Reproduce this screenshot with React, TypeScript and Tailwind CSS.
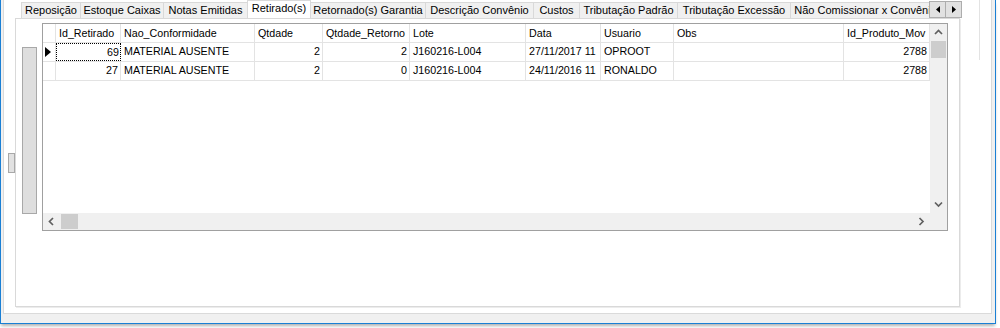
import React from 'react';

type Col = {
  key: string;
  label: string;
  width: number;
  align?: 'left' | 'right';
};

const columns: Col[] = [
  { key: 'id', label: 'Id_Retirado', width: 65, align: 'right' },
  { key: 'nao', label: 'Nao_Conformidade', width: 134 },
  { key: 'qtd', label: 'Qtdade', width: 68, align: 'right' },
  { key: 'ret', label: 'Qtdade_Retorno', width: 87, align: 'right' },
  { key: 'lote', label: 'Lote', width: 116 },
  { key: 'data', label: 'Data', width: 75 },
  { key: 'usuario', label: 'Usuario', width: 73 },
  { key: 'obs', label: 'Obs', width: 170 },
  { key: 'prod', label: 'Id_Produto_Mov', width: 86, align: 'right' },
];

const rows: Record<string, string>[] = [
  { id: '69', nao: 'MATERIAL AUSENTE', qtd: '2', ret: '2', lote: 'J160216-L004', data: '27/11/2017 11', usuario: 'OPROOT', obs: '', prod: '2788' },
  { id: '27', nao: 'MATERIAL AUSENTE', qtd: '2', ret: '0', lote: 'J160216-L004', data: '24/11/2016 11', usuario: 'RONALDO', obs: '', prod: '2788' },
];

const tabs = [
  { label: 'Reposição', width: 60 },
  { label: 'Estoque Caixas', width: 83 },
  { label: 'Notas Emitidas', width: 84 },
  { label: 'Retirado(s)', width: 64, active: true },
  { label: 'Retornado(s) Garantia', width: 115 },
  { label: 'Descrição Convênio', width: 108 },
  { label: 'Custos', width: 46 },
  { label: 'Tributação Padrão', width: 98 },
  { label: 'Tributação Excessão', width: 113 },
  { label: 'Não Comissionar x Convênio', width: 150 },
];

const Chevron = ({ dir }: { dir: 'up' | 'down' | 'left' | 'right' }) => {
  const d = {
    up: 'M1 5 L4.5 1.5 L8 5',
    down: 'M1 1.5 L4.5 5 L8 1.5',
    left: 'M5 1 L1.5 4.5 L5 8',
    right: 'M1.5 1 L5 4.5 L1.5 8',
  }[dir];
  const vertical = dir === 'up' || dir === 'down';
  return (
    <svg width={vertical ? 9 : 7} height={vertical ? 7 : 9} viewBox={vertical ? '0 0 9 7' : '0 0 7 9'}>
      <path d={d} fill="none" stroke="#606060" strokeWidth="1.7" />
    </svg>
  );
};

const TabArrow = ({ right }: { right?: boolean }) => (
  <div className={`w-[17px] h-[17px] bg-[#e1e1e1] border border-[#adadad] flex items-center justify-center ${right ? '-ml-px' : ''}`}>
    <svg width="4" height="7" viewBox="0 0 4 7">
      <path d={right ? 'M0 0 L4 3.5 L0 7 Z' : 'M4 0 L0 3.5 L4 7 Z'} fill="#000" />
    </svg>
  </div>
);

const Grid = () => {
  return (
    <div className="w-[906px] h-[208px] border border-[#a0a0a0] bg-white grid grid-cols-[887px_17px] grid-rows-[189px_17px] text-[10.7px]">
      {/* data area */}
      <div className="overflow-hidden">
        <div className="flex h-[19px] border-b border-[#e3e3e3]">
          <div className="w-[13px] shrink-0 border-r border-[#e3e3e3]" />
          {columns.map((c) => (
            <div
              key={c.key}
              style={{ width: c.width }}
              className="shrink-0 border-r border-[#e3e3e3] pl-[3px] leading-[18px] whitespace-nowrap overflow-hidden"
            >
              {c.label}
            </div>
          ))}
        </div>
        {rows.map((r, i) => (
          <div key={i} className="flex h-[19px] border-b border-[#e3e3e3]">
            <div className="w-[13px] shrink-0 border-r border-[#e3e3e3] flex items-center pl-[2px]">
              {i === 0 && (
                <svg width="6" height="10" viewBox="0 0 6 10">
                  <path d="M0 0 L6 5 L0 10 Z" fill="#000" />
                </svg>
              )}
            </div>
            {columns.map((c, ci) => {
              const focused = i === 0 && ci === 0;
              return (
                <div
                  key={c.key}
                  style={{ width: c.width }}
                  className={`shrink-0 border-r border-[#e3e3e3] leading-[17px] whitespace-nowrap overflow-hidden ${
                    c.align === 'right' ? 'text-right pr-[2px]' : 'pl-[3px]'
                  } ${focused ? 'border border-dotted border-black !pr-px leading-[15px]' : ''}`}
                >
                  {r[c.key]}
                </div>
              );
            })}
          </div>
        ))}
      </div>

      {/* vertical scrollbar */}
      <div className="bg-[#f0f0f0] flex flex-col">
        <div className="h-[17px] flex items-center justify-center">
          <Chevron dir="up" />
        </div>
        <div className="h-[17px] w-[15px] mx-px bg-[#cdcdcd]" />
        <div className="flex-1" />
        <div className="h-[17px] flex items-center justify-center">
          <Chevron dir="down" />
        </div>
      </div>

      {/* horizontal scrollbar */}
      <div className="bg-[#f0f0f0] flex items-stretch">
        <div className="w-[17px] flex items-center justify-center">
          <Chevron dir="left" />
        </div>
        <div className="w-[17px] h-[15px] my-px ml-px bg-[#cdcdcd]" />
        <div className="flex-1" />
        <div className="w-[17px] flex items-center justify-center">
          <Chevron dir="right" />
        </div>
      </div>
      <div className="bg-[#f0f0f0]" />
    </div>
  );
};

export default function App() {
  return (
    <div className="w-[1000px] h-[328px] bg-white overflow-hidden font-['Liberation_Sans',Arial,sans-serif] text-[11px] text-black">
      <div className="w-[996px] h-[324px] bg-[#f0f0f0] border-x border-b border-[#1a7fd4] shadow-[0_3px_3px_-1px_rgba(0,0,0,0.3)]">
        <div className="ml-[2px] w-[989px] h-[314px] bg-white border-x border-b border-[#dadada] flex">
          {/* small splitter handle */}
          <div className="ml-[4px] mt-[153px] w-[7px] h-[20px] bg-[#e1e1e1] border border-[#a8a8a8] shrink-0" />

          {/* tab control */}
          <div className="w-[947px] h-[308px] flex flex-col shrink-0">
            <div className="h-[18px] flex">
              <div className="w-[914px] overflow-hidden pl-[6px] flex items-end">
                {tabs.map((t) =>
                  t.active ? (
                    <div
                      key={t.label}
                      style={{ width: t.width }}
                      className="-ml-px relative z-10 -mb-px h-[19px] bg-white border-t border-x border-[#d9d9d9] text-center leading-[14px] shrink-0 whitespace-nowrap"
                    >
                      {t.label}
                    </div>
                  ) : (
                    <div
                      key={t.label}
                      style={{ width: t.width }}
                      className="h-[16px] bg-[#f0f0f0] border-t border-r first:border-l border-[#d9d9d9] text-center leading-[15px] shrink-0 whitespace-nowrap overflow-hidden"
                    >
                      {t.label}
                    </div>
                  )
                )}
              </div>
              <div className="flex items-end">
                <TabArrow />
                <TabArrow right />
              </div>
            </div>

            {/* tab page */}
            <div className="w-[945px] h-[289px] border border-[#d9d9d9] bg-white shadow-[1px_1px_0_#ececec] flex pt-[4px]">
              <div className="ml-[6px] mt-[24px] w-[15px] h-[167px] bg-[#dedede] border border-[#a8a8a8] shrink-0" />
              <div className="ml-[5px]">
                <Grid />
              </div>
            </div>
          </div>

          {/* right margin area */}
          <div className="flex-1 flex">
            <div className="ml-[17px] w-px h-[60px] bg-[#e3e3e3]" />
          </div>
        </div>
      </div>
    </div>
  );
}
